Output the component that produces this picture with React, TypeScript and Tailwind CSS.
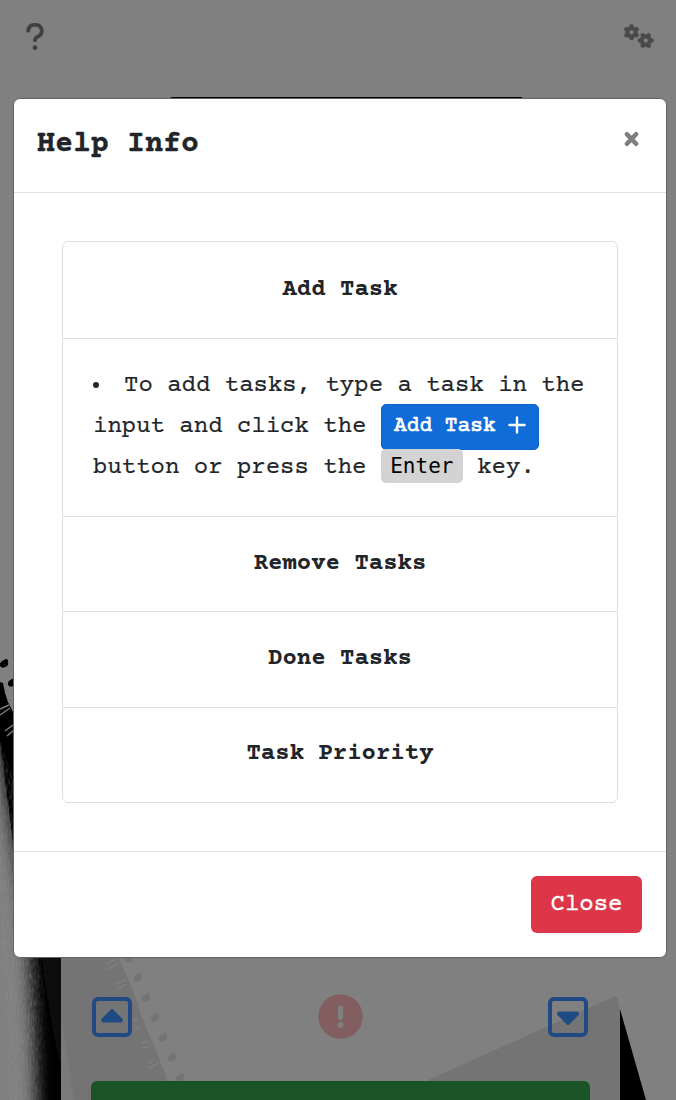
import {
  FaQuestion,
  FaGears,
} from "react-icons/fa6";

const perforations = [
  [4, 663], [12, 682], [129, 958], [138, 977], [146, 997], [155, 1017], [163, 1037], [172, 1057], [180, 1077],
];

function Perforation({ x, y }: { x: number; y: number }) {
  return (
    <path
      d="M-4 3 Q-5 -1 0 -3 Q4 -6 4 -1 Q5 3 1 4 Q-2 6 -4 3Z"
      transform={`translate(${x} ${y})`}
    />
  );
}

function Backdrop() {
  return (
    <svg className="absolute inset-0" width="676" height="1100" viewBox="0 0 676 1100">
      <defs>
        <filter id="soft" x="-100%" y="-20%" width="300%" height="140%">
          <feGaussianBlur stdDeviation="8 5" />
        </filter>
        <filter id="grain" x="0" y="0" width="100%" height="100%">
          <feTurbulence type="fractalNoise" baseFrequency="0.6 0.15" numOctaves="2" seed="4" />
          <feColorMatrix values="0 0 0 0 0.3  0 0 0 0 0.3  0 0 0 0 0.3  1.4 0 0 0 -0.5" />
        </filter>
        <linearGradient id="grainFade" x1="0" x2="1">
          <stop offset="0" stopColor="#fff" stopOpacity="0.4" />
          <stop offset="0.5" stopColor="#fff" stopOpacity="0.6" />
          <stop offset="0.8" stopColor="#fff" stopOpacity="0" />
        </linearGradient>
        <mask id="grainMask">
          <path d="M0 740 L13 780 L61 950 V1100 H10 L0 900Z" fill="url(#grainFade)" />
        </mask>
        <clipPath id="leftStrip">
          <rect x="0" y="738" width="61" height="362" />
        </clipPath>
      </defs>
      <rect width="676" height="1100" fill="#808080" />
      <path d="M0 682 L3 683 L5 693 L8 702 L11 708 L14 714 V850 L0 740Z" fill="#000" />
      {perforations.slice(0, 2).map(([x, y]) => (
        <Perforation key={y} x={x} y={y} />
      ))}
      <path d="M0 709 L9 705 M0 715 L10 708 M5 731 L13 725 M7 736 L14 730" stroke="#808080" strokeWidth="1.4" />
      <g clipPath="url(#leftStrip)">
        <path d="M-14 700 L0 760 L10 820 L21 890 L29 960 L34 1040 L37 1130 H130 V700Z" fill="#000" filter="url(#soft)" />
        <path d="M0 735 L13 816 L37 950 L61 1085 V735Z" fill="#000" />
        <path d="M42 958 H61 V1068 L50 1015Z" fill="#0c0c0c" />
        <g mask="url(#grainMask)">
          <rect x="0" y="740" width="61" height="360" filter="url(#grain)" />
        </g>
      </g>
      <path d="M61 950 H116 L124 970 L133 991 L143 1020 L154 1046 L166 1076 L168 1100 H61Z" fill="#747474" />
      <path d="M61 1015 L66 1050 L74 1100 H61Z" fill="#7a7a7a" />
      <path d="M105 964 L117 959 M108 969 L118 964 M114 984 L126 980 M117 989 L126 984 M133 1020 L138 1019 M135 1028 L139 1027 M141 1044 L148 1041 M142 1048 L149 1047 M149 1063 L153 1060 M149 1068 L159 1063" stroke="#808080" strokeWidth="1.4" />
      <g fill="#737373">
        {perforations.slice(2).map(([x, y]) => (
          <Perforation key={y} x={x} y={y} />
        ))}
      </g>
      <path d="M424 1082 L613 997 Q617 996 618 1000 L620 1009 V1100 H424Z" fill="#747474" />
      <path d="M620 1009 L646 1100 H620Z" fill="#000" />
    </svg>
  );
}

function Caret({ down = false }: { down?: boolean }) {
  return (
    <svg width="40" height="40" viewBox="0 0 40 40" fill="none">
      <rect x="2" y="2" width="36" height="36" rx="4" stroke="currentColor" strokeWidth="4" />
      <path
        d="M18.8 12.4 Q20 11.4 21.2 12.4 L30.6 22 Q31.6 25.2 29 25.4 H11 Q8.400 25.2 9.400 22Z"
        fill="currentColor"
        transform={down ? "matrix(1 0 0 -1 0 40)" : undefined}
      />
    </svg>
  );
}

function Item({ title }: { title: string }) {
  return (
    <div className="flex h-[95.25px] items-center justify-center border-t border-[#dfdfdf] pb-px text-2xl font-bold">
      {title}
    </div>
  );
}

export default function App() {
  return (
    <div className="relative h-[1100px] w-[676px] overflow-hidden font-['Courier_Prime','Liberation_Mono',monospace] text-[#212529]">
      <Backdrop />
      <div className="relative flex h-full flex-col">
        <header className="flex h-[96.5px] items-start justify-between pt-[21px] pr-[22px] pl-[25px] text-[#47494b]">
          <FaQuestion className="h-[31px] w-[20px] text-[#404040]" />
          <FaGears className="mt-[3px] h-[24px] w-[30px] stroke-current stroke-[6px]" />
        </header>
        <div className="mx-auto h-20 w-[355px] translate-x-2 rounded bg-black" />
        <div className="mt-auto flex flex-col pr-[86px] pl-[91px]">
          <div className="mr-[2px] mb-[42px] ml-[1px] flex items-center justify-between text-[#1f4a84]">
            <Caret />
            <svg width="45" height="45" viewBox="0 0 45 45">
              <circle cx="22.5" cy="22.5" r="22.3" fill="#835e61" />
              <path d="M22.500 14 V23.500" stroke="#808080" strokeWidth="5" strokeLinecap="round" />
              <circle cx="22.500" cy="31" r="3" fill="#808080" />
            </svg>
            <Caret down />
          </div>
          <div className="h-[19px] rounded-t-[6px] bg-[#1a5426]" />
        </div>
      </div>

      <div className="absolute top-[98px] left-[13px] flex h-[860px] w-[653.5px] flex-col rounded-[7px] border border-[#656565] bg-white">
        <div className="flex h-[94px] items-start justify-between border-b border-[#dee2e6] pt-[26px] pr-[27px] pl-[23px]">
          <h1 className="text-[30px] leading-10 font-bold [-webkit-text-stroke:0.3px]">Help Info</h1>
          <svg className="mt-[6px]" width="15" height="16" viewBox="0 0 15 16">
            <path d="M3 3.200 L12 12.800 M12 3.200 L3 12.800" stroke="#7f7f7f" strokeWidth="4.600" strokeLinecap="round" />
          </svg>
        </div>
        <div className="flex-1 px-12 pt-12">
          <div className="w-[556px] overflow-hidden rounded-[6px] border border-[#dfdfdf]">
            <div className="flex h-[95.5px] items-center justify-center text-2xl font-bold">Add Task</div>
            <div className="h-[178.5px] border-t border-[#dfdfdf] pt-[27px] pl-[30px] text-2xl whitespace-pre [-webkit-text-stroke:0.2px]">
              <div className="flex h-[41px] items-center">
                <span className="mr-[25px] mb-[2px] h-[6px] w-[6px] rounded-full bg-[#212529]" />
                <span>To add tasks, type a task in the</span>
              </div>
              <div className="flex h-[41px] items-center">
                <span>input and click the </span>
                <span className="flex h-[46px] w-[158px] shrink-0 items-center justify-center rounded-[5px] border border-[#0d65ca] bg-[#106cd9] pb-[2px] text-[21.2px] text-white [-webkit-text-stroke:0.7px]">
                  Add Task
                  <svg className="mb-[3px] ml-[12px]" width="18" height="18" viewBox="0 0 18 18">
                    <path d="M9 1.500 V16.500 M1.500 9 H16.500" stroke="currentColor" strokeWidth="2.400" strokeLinecap="round" />
                  </svg>
                </span>
              </div>
              <div className="flex h-[41px] items-center">
                <span>button or press the </span>
                <kbd className="relative -top-[2px] flex h-[34px] w-[82px] items-center justify-center rounded-[5px] bg-[#d3d3d3] font-['DejaVu_Sans_Mono',monospace] text-[21px] text-black [-webkit-text-stroke:0px]">
                  Enter
                </kbd>
                <span> key.</span>
              </div>
            </div>
            <Item title="Remove Tasks" />
            <Item title="Done Tasks" />
            <Item title="Task Priority" />
          </div>
        </div>
        <div className="flex h-[106px] items-start justify-end border-t border-[#dee2e6] pt-[24px] pr-[24px]">
          <button className="flex h-[57px] w-[111px] items-center justify-center rounded-[6px] bg-[#dc3648] pl-px text-2xl text-white [-webkit-text-stroke:0.4px]">
            Close
          </button>
        </div>
      </div>
    </div>
  );
}
